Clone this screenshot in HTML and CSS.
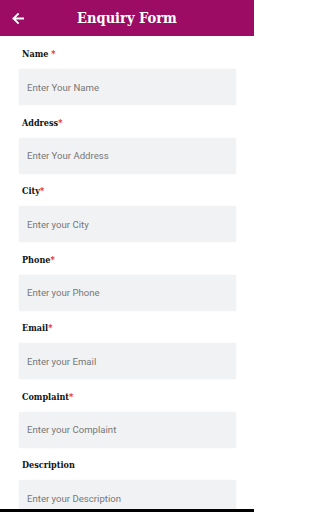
FILE: index.html
```html
<!DOCTYPE html>
<html lang="en">
<head>
<meta charset="utf-8">
<title>Enquiry Form</title>
<link rel="stylesheet" href="styles.css">
</head>
<body>
<div class="app">
  <header class="topbar">
    <span class="back" aria-label="Back">
      <svg width="12" height="11" viewBox="0 0 12 11"><path d="M11.5 5.5H1.5M6 1L1.5 5.5L6 10" fill="none" stroke="#fff" stroke-width="1.8" stroke-linecap="square"/></svg>
    </span>
    <h1 class="title">Enquiry Form</h1>
  </header>
  <form class="form">
    <div class="field"><label class="label">Name <span class="req">*</span></label><div class="input">Enter Your Name</div></div>
    <div class="field"><label class="label">Address<span class="req">*</span></label><div class="input">Enter Your Address</div></div>
    <div class="field"><label class="label">City<span class="req">*</span></label><div class="input">Enter your City</div></div>
    <div class="field"><label class="label">Phone<span class="req">*</span></label><div class="input">Enter your Phone</div></div>
    <div class="field"><label class="label">Email<span class="req">*</span></label><div class="input">Enter your Email</div></div>
    <div class="field"><label class="label">Complaint<span class="req">*</span></label><div class="input">Enter your Complaint</div></div>
    <div class="field"><label class="label">Description</label><div class="input">Enter your Description</div></div>
  </form>
  <div class="navbar"></div>
</div>
</body>
</html>
```

FILE: styles.css
```css
html, body {
  margin: 0;
  padding: 0;
  background: #fff;
  overflow: hidden;
}
.app {
  width: 254px;
  height: 512px;
  overflow: hidden;
  position: relative;
  font-family: Roboto, "Liberation Sans", sans-serif;
}
.topbar {
  height: 36px;
  background: #9c0b64;
  display: flex;
  align-items: center;
  position: relative;
}
.back {
  display: flex;
  margin-left: 12px;
  margin-top: 1px;
}
.title {
  position: absolute;
  left: 0;
  right: 0;
  margin: 0;
  text-align: center;
  color: #fff;
  font-family: "DejaVu Serif Condensed", "DejaVu Serif", serif;
  font-stretch: condensed;
  font-weight: bold;
  font-size: 14.5px;
  line-height: 36px;
}
.form {
  padding: 10px 18px 0 19px;
  display: flex;
  flex-direction: column;
  gap: 9.5px;
}
.field {
  display: flex;
  flex-direction: column;
}
.label {
  font-family: "DejaVu Serif Condensed", "DejaVu Serif", serif;
  font-stretch: condensed;
  font-weight: bold;
  font-size: 9px;
  line-height: 16px;
  color: #111;
  padding-left: 3px;
  margin-bottom: 7px;
}
.req {
  color: #e01b24;
}
.input {
  height: 36px;
  background: #f1f2f4;
  border-radius: 2px;
  box-shadow: 0 0 1px rgba(0, 0, 0, 0.12);
  display: flex;
  align-items: center;
  padding-left: 8px;
  font-size: 9.6px;
  color: #777;
}
.navbar {
  position: absolute;
  left: 0;
  right: 0;
  bottom: 0;
  height: 3px;
  background: #000;
}
```
